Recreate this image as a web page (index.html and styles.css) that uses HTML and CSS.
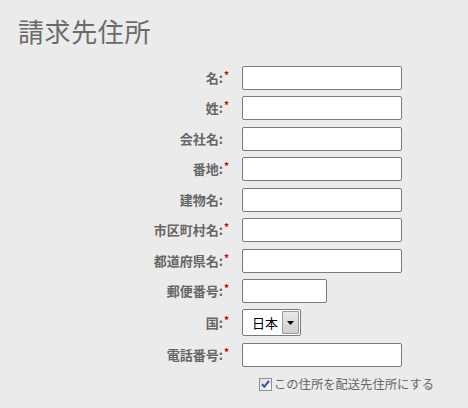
FILE: index.html
```html
<!DOCTYPE html>
<html lang="ja">
<head>
<meta charset="utf-8">
<link rel="stylesheet" href="styles.css">
</head>
<body>
<div class="page">
  <h1 class="title">請求先住所</h1>
  <form class="form">
    <label class="lbl">名:<span class="req">*</span></label>
    <input class="field" type="text">
    <label class="lbl">姓:<span class="req">*</span></label>
    <input class="field" type="text">
    <label class="lbl">会社名:<span class="req blank">*</span></label>
    <input class="field" type="text">
    <label class="lbl">番地:<span class="req">*</span></label>
    <input class="field" type="text">
    <label class="lbl">建物名:<span class="req blank">*</span></label>
    <input class="field" type="text">
    <label class="lbl">市区町村名:<span class="req">*</span></label>
    <input class="field" type="text">
    <label class="lbl">都道府県名:<span class="req">*</span></label>
    <input class="field" type="text">
    <label class="lbl">郵便番号:<span class="req">*</span></label>
    <input class="field short" type="text">
    <label class="lbl lbl-sel">国:<span class="req">*</span></label>
    <div class="select">
      <span class="select-val">日本</span>
      <span class="select-btn"><svg width="7" height="4" viewBox="0 0 7 4"><path d="M0 0h7L3.5 4z" fill="#000"/></svg></span>
    </div>
    <label class="lbl">電話番号:<span class="req">*</span></label>
    <input class="field" type="text">
    <div class="check-row">
      <span class="cbox"><svg width="11" height="11" viewBox="0 0 11 11"><path d="M2 5.2l2.3 2.6L9 1.8" fill="none" stroke="#2b4fa6" stroke-width="2"/></svg></span>
      <span class="check-text">この住所を配送先住所にする</span>
    </div>
  </form>
</div>
</body>
</html>
```
FILE: styles.css
```css
html, body {
  margin: 0;
  padding: 0;
  background: #ebebeb;
}
body {
  font-family: "Noto Sans CJK JP", "Noto Sans", sans-serif;
  color: #666;
}
.page {
  padding: 13px 0 0 0;
}
.title {
  margin: 0 0 0 18px;
  font-size: 26px;
  line-height: 36px;
  font-weight: 400;
  color: #6a6a6a;
  letter-spacing: 0.6px;
}
.form {
  display: grid;
  grid-template-columns: 229px 160px;
  column-gap: 13px;
  row-gap: 6.43px;
  margin-top: 17px;
}
.lbl {
  display: flex;
  justify-content: flex-end;
  align-items: center;
  height: 24px;
  font-size: 13px;
  font-weight: 700;
  line-height: 16px;
  color: #666;
  white-space: nowrap;
}
.lbl-sel {
  height: 27px;
}
.req {
  color: #c00;
  font-size: 10px;
  line-height: 10px;
  align-self: center;
  margin-top: -6px;
  margin-left: 1px;
}
.req.blank {
  visibility: hidden;
}
.field {
  box-sizing: border-box;
  width: 160px;
  height: 24px;
  margin: 0;
  border: 1px solid #7a7a7a;
  border-radius: 2px;
  background: #fff;
  padding: 0 4px;
}
.field.short {
  width: 85px;
}
.select {
  box-sizing: border-box;
  width: 59px;
  height: 27px;
  display: flex;
  align-items: stretch;
  border: 1px solid #7a7a7a;
  border-radius: 2px;
  background: #fff;
}
.select-val {
  flex: 1;
  font-size: 13px;
  line-height: 25px;
  color: #000;
  padding-left: 9px;
}
.select-btn {
  box-sizing: border-box;
  width: 17px;
  margin: 1px;
  border: 1px solid #9a9a9a;
  border-radius: 1px;
  background: linear-gradient(#e8e8e8, #cfcfcf);
  display: flex;
  align-items: center;
  justify-content: center;
}
.check-row {
  grid-column: 2;
  display: flex;
  align-items: center;
  height: 16px;
  padding-left: 17px;
  margin-top: 3px;
  white-space: nowrap;
}
.cbox {
  box-sizing: border-box;
  width: 13px;
  height: 13px;
  border: 1px solid #8e8f8f;
  background: linear-gradient(135deg, #dcdcdc, #fafafa);
  display: flex;
  align-items: center;
  justify-content: center;
}
.check-text {
  margin-left: 2px;
  font-size: 12.3px;
  color: #666;
  line-height: 16px;
}
```
